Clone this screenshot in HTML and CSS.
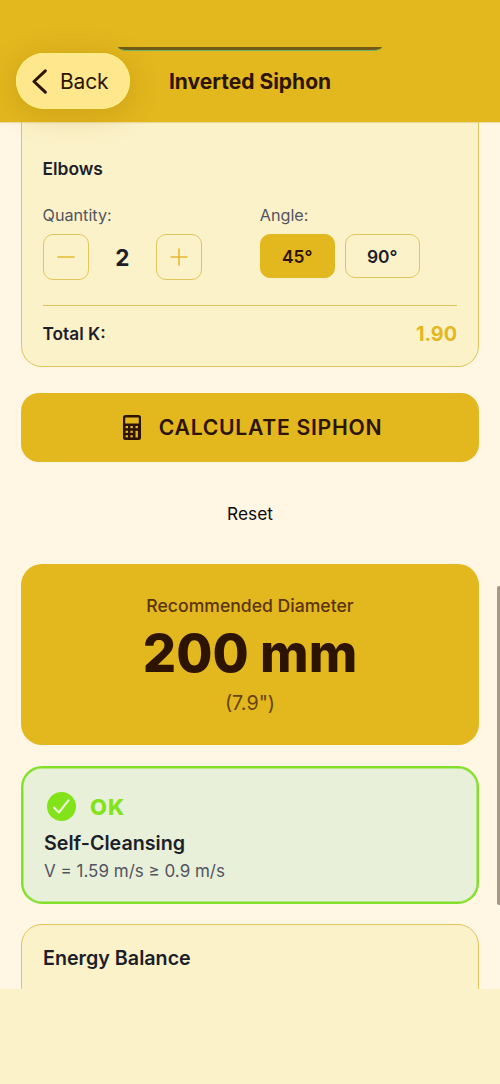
FILE: index.html
```html
<!DOCTYPE html>
<html lang="en">
<head>
<meta charset="utf-8">
<title>Inverted Siphon</title>
<link rel="stylesheet" href="styles.css">
</head>
<body>
<div class="app">
  <header class="header">
    <div class="island-edge"></div>
    <button class="back">
      <svg class="back-icon" width="18" height="26" viewBox="0 0 18 26"><path d="M14.3 2.8 3 13.5 14.3 24.2"/></svg>
      <span class="back-label">Back</span>
    </button>
    <h1 class="title"><span>Inverted Siphon</span></h1>
  </header>
  <main class="content">
    <section class="card elbows">
      <h2 class="elbows-title"><span>Elbows</span></h2>
      <div class="fields">
        <div class="field">
          <div class="label"><span>Quantity:</span></div>
          <div class="stepper">
            <button class="step"><svg width="18" height="18" viewBox="0 0 18 18"><path d="M1 9H17"/></svg></button>
            <span class="count">2</span>
            <button class="step"><svg width="18" height="18" viewBox="0 0 18 18"><path d="M1 9H17M9 1V17"/></svg></button>
          </div>
        </div>
        <div class="field">
          <div class="label"><span>Angle:</span></div>
          <div class="angles">
            <button class="angle selected">45°</button>
            <button class="angle">90°</button>
          </div>
        </div>
      </div>
      <div class="total"><span class="total-label">Total K:</span><span class="total-value">1.90</span></div>
    </section>
    <button class="calculate">
      <svg width="18" height="25" viewBox="0 0 18 25"><rect width="18" height="25" rx="2.5" fill="#2d1400"/><g fill="#e3b71e"><rect x="2.2" y="2.6" width="13.6" height="6" rx=".5"/><rect x="2.6" y="11" width="2.4" height="2.2"/><rect x="7.4" y="11" width="2.4" height="2.2"/><rect x="12.5" y="11" width="2.4" height="2.2"/><rect x="2.6" y="15.7" width="2.4" height="2.2"/><rect x="7.4" y="15.7" width="2.4" height="2.2"/><rect x="2.6" y="20.2" width="2.4" height="2.2"/><rect x="7.4" y="20.2" width="2.4" height="2.2"/><rect x="12.5" y="15.7" width="2.4" height="6.7" rx=".5"/></g></svg>
      <span class="calculate-label">CALCULATE SIPHON</span>
    </button>
    <button class="reset"><span>Reset</span></button>
    <section class="result">
      <div class="result-label"><span>Recommended Diameter</span></div>
      <div class="result-value"><span>200 mm</span></div>
      <div class="result-inches"><span>(7.9")</span></div>
    </section>
    <section class="status">
      <div class="status-head">
        <svg width="29" height="29" viewBox="0 0 29 29"><circle cx="14.5" cy="14.5" r="14.5" fill="#83e31b"/><path d="m7.2 15.7 4.7 4.8 9.6-12.2" fill="none" stroke="#eaf3da" stroke-width="2.1" stroke-linecap="round" stroke-linejoin="round"/></svg>
        <span class="ok">OK</span>
      </div>
      <h2 class="status-title"><span>Self-Cleansing</span></h2>
      <p class="status-detail"><span>V = 1.59 m/s ≥ 0.9 m/s</span></p>
    </section>
    <section class="card energy"><h2 class="energy-title"><span>Energy Balance</span></h2></section>
    <div class="scrollbar"></div>
  </main>
  <footer class="footer"></footer>
</div>
</body>
</html>
```

FILE: styles.css
```css
* { box-sizing: border-box; }
body { margin: 0; font-family: Inter, "Liberation Sans", sans-serif; color: #1c1f29; background: #fff6e3; }
h1, h2, p { margin: 0; }
button { font: inherit; color: inherit; border: 0; background: none; padding: 0; white-space: nowrap; }
svg { display: block; flex: none; }
.app { width: 500px; height: 1084px; display: flex; flex-direction: column; overflow: hidden; }
.header { position: relative; z-index: 1; flex: none; height: 122px; padding: 53px 16px 0; background: #e3b71e; display: grid; grid-template-columns: 114px 1fr 114px; color: #2d1400; box-shadow: 0 1px 1px #c8aa4a55; }
.island-edge { position: absolute; left: 118px; top: 47px; width: 264px; height: 4px; border-radius: 0 0 9px 9px / 0 0 4px 4px; background: #705a16; border-bottom: 1px solid #70b568; }
.back { width: 114px; height: 56px; border-radius: 28px; background: #fee78d; display: flex; align-items: center; padding-left: 15px; gap: 11px; box-shadow: 0 5px 28px 3px #8b650038, inset 0 0 0 1px #ffef86; }
.back-icon path { fill: none; stroke: #2d1400; stroke-width: 3; stroke-linecap: round; stroke-linejoin: round; }
.back-label { font-size: 21px; letter-spacing: -.2px; }
.title { height: 56px; display: flex; align-items: center; justify-content: center; font-size: 21px; font-weight: 680; white-space: nowrap; }
.content { position: relative; flex: none; height: 867px; padding: 0 21px; background: #fff6e3; overflow: hidden; }
.card { background: #fcf2c9; border: 1px solid #e2c55b; }
.elbows { height: 245px; border-top: 0; border-radius: 0 0 21px 21px; padding: 34px 21px 0 20.5px; }
.elbows-title { height: 24px; line-height: 25px; font-size: 17.4px; font-weight: 600; }
.fields { display: grid; grid-template-columns: 1fr 1fr; column-gap: 20px; padding-top: 24px; }
.label { height: 20px; line-height: 22px; margin-bottom: 10px; font-size: 16.2px; color: #535461; }
.stepper { display: flex; align-items: center; justify-content: space-between; width: 159.5px; }
.step { width: 46px; height: 46px; border: 1px solid #e2c55b; border-radius: 10px; display: grid; place-items: center; }
.step path { stroke: #e4bb31; stroke-width: 1.6; stroke-linecap: round; }
.count { font-size: 22.5px; font-weight: 700; }
.angles { display: flex; gap: 10px; }
.angle { width: 75px; height: 44px; border: 1px solid #e2c55b; border-radius: 10px; font-size: 17.4px; font-weight: 600; }
.selected { background: #e3b71e; color: #2d1400; border-color: #e3b71e; }
.total { height: 56px; margin-top: 25px; border-top: 1px solid #e2c55b; display: flex; justify-content: space-between; align-items: center; }
.total-label { font-size: 17.3px; font-weight: 600; }
.total-value { font-size: 19.8px; font-weight: 700; color: #e3b71e; }
.calculate { width: 100%; height: 69px; margin-top: 26px; padding-left: 5px; border-radius: 18px; background: #e3b71e; color: #2d1400; display: flex; align-items: center; justify-content: center; gap: 18px; }
.calculate-label { font-size: 21.2px; line-height: 27px; padding-bottom: 1px; font-weight: 600; letter-spacing: .7px; }
.reset { display: block; width: 100%; height: 60px; margin-top: 21px; font-size: 17.3px; color: #0b0909; }
.result { height: 181px; margin-top: 21px; padding-top: 30px; border-radius: 21px; background: #e3b71e; color: #2d1400; text-align: center; }
.result-label { height: 24px; line-height: 24px; font-size: 17.6px; font-weight: 550; color: #5a340a; }
.result-value { height: 71px; line-height: 71px; font-size: 52.4px; font-weight: 800; }
.result-inches { height: 28px; line-height: 28px; font-size: 19.8px; color: #694409; }
.status { height: 138px; margin-top: 21px; padding: 24px 21px 0; border: 2.5px solid #83e02a; border-radius: 21px; background: #e8f0d9; box-shadow: inset 0 0 0 .5px #83e02a; }
.status-head { display: flex; align-items: center; gap: 14px; height: 29px; padding-left: 3px; }
.ok { font-size: 22px; font-weight: 850; letter-spacing: 1px; color: #83e31b; }
.status-title { height: 30px; margin-top: 7px; line-height: 30px; font-size: 19.7px; font-weight: 600; }
.status-detail { height: 24px; line-height: 26px; font-size: 17px; color: #535461; }
.energy { height: 200px; margin-top: 20px; padding: 20px 21px; border-radius: 21px; }
.energy-title { line-height: 26px; font-size: 19.7px; font-weight: 600; }
.scrollbar { position: absolute; right: 0; top: 464px; width: 3px; height: 319px; background: #a39986; border-radius: 2px 0 0 2px; }
.footer { flex: none; height: 95px; background: #fcf2c9; }
```
